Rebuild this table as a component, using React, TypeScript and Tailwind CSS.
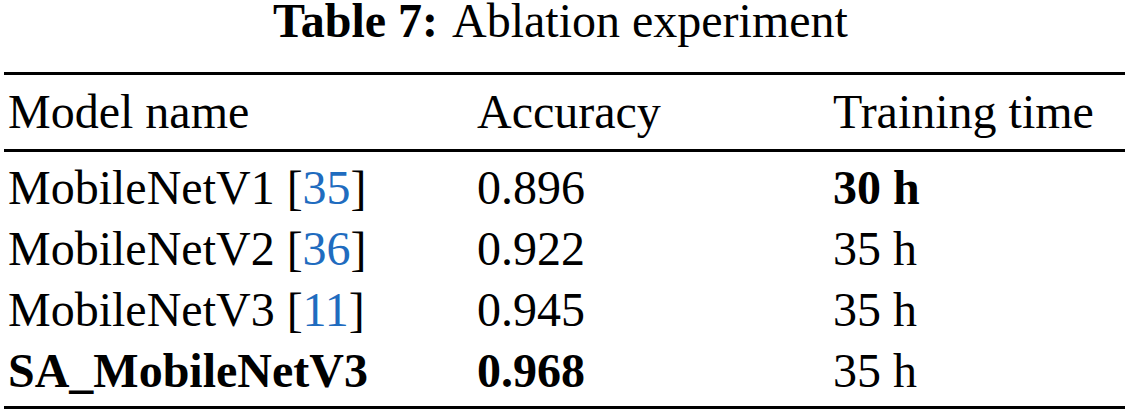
import React from "react";

const rows: { name: React.ReactNode; acc: React.ReactNode; time: React.ReactNode }[] = [
  {
    name: (
      <>
        MobileNetV1 [<span className="text-[#1f6cbf]">35</span>]
      </>
    ),
    acc: "0.896",
    time: <span className="font-bold">30 h</span>,
  },
  {
    name: (
      <>
        MobileNetV2 [<span className="text-[#1f6cbf]">36</span>]
      </>
    ),
    acc: "0.922",
    time: "35 h",
  },
  {
    name: (
      <>
        MobileNetV3 [<span className="text-[#1f6cbf]">11</span>]
      </>
    ),
    acc: "0.945",
    time: "35 h",
  },
  {
    name: <span className="font-bold">SA_MobileNetV3</span>,
    acc: <span className="font-bold">0.968</span>,
    time: "35 h",
  },
];

export default function App() {
  return (
    <div className="w-[1129px] h-[412px] bg-white text-black font-[family-name:'Liberation_Serif','Times_New_Roman',serif] text-[48px] overflow-hidden">
      <div className="flex justify-center pr-[8px] pt-[1px] h-[42px] leading-[40px]">
        <span className="inline-block font-bold">Table 7:</span>
        <span className="inline-block ml-[14px]">Ablation experiment</span>
      </div>
      <div className="mx-[4px] mt-[30px]">
        <div className="h-[3px] bg-black" />
        <div className="grid grid-cols-[469px_356px_1fr] leading-[61px] pt-[6px] pb-[7px] pl-[4px]">
          <div>Model name</div>
          <div>Accuracy</div>
          <div>Training time</div>
        </div>
        <div className="h-[3px] bg-black" />
        <div className="pt-[5px] pb-[5px]">
          {rows.map((r, i) => (
            <div key={i} className="grid grid-cols-[469px_356px_1fr] leading-[61px] pl-[4px]">
              <div>{r.name}</div>
              <div>{r.acc}</div>
              <div>{r.time}</div>
            </div>
          ))}
        </div>
        <div className="h-[3px] bg-black" />
      </div>
    </div>
  );
}
